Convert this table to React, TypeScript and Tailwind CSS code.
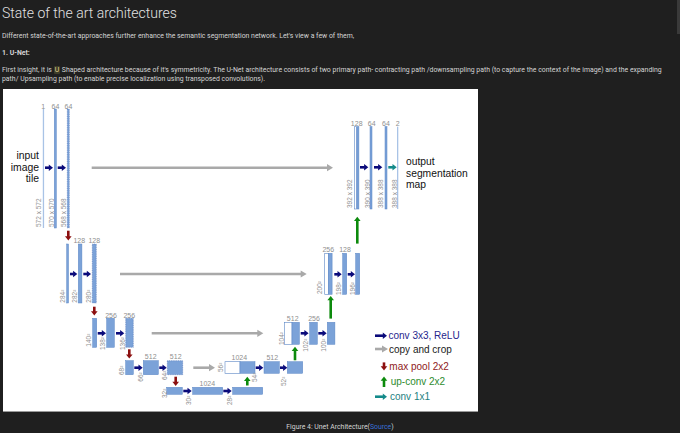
const BAR = "#7ba2d8";
const EDGE = "#5b86c5";
const NAVY = "#0a0a7a";
const GRAY = "#a9a9a9";
const RED = "#8c0f0f";
const GREEN = "#0c8a0c";
const TEAL = "#138a8a";
const LABEL = "#8f8f8f";

type BarProps = { x: number; y: number; w: number; h: number; kind?: "blue" | "dash" | "white" | "light" };

function Bar({ x, y, w, h, kind = "blue" }: BarProps) {
  if (kind === "white")
    return <rect x={x} y={y} width={w} height={h} fill="#ffffff" stroke={EDGE} strokeWidth={0.6} />;
  if (kind === "light") return <rect x={x} y={y} width={w} height={h} fill="#a9c3e6" />;
  if (kind === "dash")
    return (
      <rect x={x} y={y} width={w} height={h} fill={BAR} stroke="#3f62ad" strokeWidth={0.5} strokeDasharray="0.9 0.9" />
    );
  return <rect x={x} y={y} width={w} height={h} fill={BAR} stroke={EDGE} strokeWidth={0.5} />;
}

function Right({ x1, x2, y, color = NAVY }: { x1: number; x2: number; y: number; color?: string }) {
  return (
    <g>
      <line x1={x1} y1={y} x2={x2 - 3.5} y2={y} stroke={color} strokeWidth={2.6} />
      <polygon points={`${x2 - 4.2},${y - 3.3} ${x2},${y} ${x2 - 4.2},${y + 3.3}`} fill={color} />
    </g>
  );
}

function Copy({ x1, x2, y }: { x1: number; x2: number; y: number }) {
  return (
    <g>
      <line x1={x1} y1={y} x2={x2 - 5} y2={y} stroke={GRAY} strokeWidth={2.6} />
      <polygon points={`${x2 - 6},${y - 3.6} ${x2},${y} ${x2 - 6},${y + 3.6}`} fill={GRAY} />
    </g>
  );
}

function Down({ x, y1, y2 }: { x: number; y1: number; y2: number }) {
  return (
    <g>
      <line x1={x} y1={y1} x2={x} y2={y2 - 3.5} stroke={RED} strokeWidth={2.6} />
      <polygon points={`${x - 3.3},${y2 - 4.2} ${x + 3.3},${y2 - 4.2} ${x},${y2}`} fill={RED} />
    </g>
  );
}

function Up({ x, y1, y2 }: { x: number; y1: number; y2: number }) {
  return (
    <g>
      <line x1={x} y1={y1} x2={x} y2={y2 + 3.5} stroke={GREEN} strokeWidth={2.6} />
      <polygon points={`${x - 3.3},${y2 + 4.2} ${x + 3.3},${y2 + 4.2} ${x},${y2}`} fill={GREEN} />
    </g>
  );
}

function Num({ x, y, t }: { x: number; y: number; t: string }) {
  return (
    <text x={x} y={y + 2.5} fontSize={7} fill={LABEL} textAnchor="middle">
      {t}
    </text>
  );
}

// rotated size label, cx = visual centre, by = bottom end of the text
function Dim({ cx, by, t }: { cx: number; by: number; t: string }) {
  const bx = cx + 2.3;
  return (
    <text x={bx} y={by} fontSize={6.5} fill={LABEL} transform={`rotate(-90 ${bx} ${by})`}>
      {t}
    </text>
  );
}

function UNet() {
  return (
    <svg width="475" height="323" viewBox="3 89 475 323" fontFamily="'Liberation Sans', Arial, sans-serif">
      {/* encoder level 1 */}
      <Num x={43.3} y={106} t="1" />
      <Num x={55.5} y={106} t="64" />
      <Num x={68.5} y={106} t="64" />
      <Bar x={42.8} y={109} w={1.3} h={119} kind="light" />
      <Bar x={54.3} y={109} w={2} h={119} />
      <Bar x={67.3} y={109} w={2} h={119} kind="dash" />
      <Right x1={45} x2={53} y={167.7} />
      <Right x1={57.7} x2={66} y={167.7} />
      <Dim cx={39} by={227} t="572 x 572" />
      <Dim cx={51.7} by={227} t="570 x 570" />
      <Dim cx={64} by={227} t="568 x 568" />
      <text fontSize={10.4} fill="#111" textAnchor="end">
        <tspan x={39} y={158.8}>input</tspan>
        <tspan x={39} y={170.5}>image</tspan>
        <tspan x={39} y={182}>tile</tspan>
      </text>
      <Copy x1={91.7} x2={333} y={167.7} />
      <Down x={68.3} y1={230.7} y2={240.5} />

      {/* encoder level 2 */}
      <Num x={79.3} y={240.3} t="128" />
      <Num x={94.3} y={240.3} t="128" />
      <Bar x={66.7} y={244} w={1.8} h={59} />
      <Bar x={78.3} y={244} w={3.6} h={59} />
      <Bar x={92.3} y={244} w={4} h={59} kind="dash" />
      <Right x1={70} x2={77.3} y={274} />
      <Right x1={83.3} x2={91} y={274} />
      <Dim cx={62.3} by={302.7} t="284²" />
      <Dim cx={75} by={302.7} t="282²" />
      <Dim cx={88.3} by={302.7} t="280²" />
      <Copy x1={120} x2={306.7} y={274} />
      <Down x={94.3} y1={306.7} y2={315.5} />

      {/* encoder level 3 */}
      <Num x={111} y={315.3} t="256" />
      <Num x={129.3} y={315.3} t="256" />
      <Bar x={92.7} y={318.3} w={4} h={29} />
      <Bar x={106.7} y={318.3} w={7.6} h={29} />
      <Bar x={125.7} y={318.3} w={7.6} h={29} kind="dash" />
      <Right x1={97.7} x2={106} y={333.3} />
      <Right x1={116} x2={124.3} y={333.3} />
      <Dim cx={89} by={346.7} t="140²" />
      <Dim cx={102.7} by={350} t="138²" />
      <Dim cx={122.7} by={350} t="136²" />
      <Copy x1={151.7} x2={263.3} y={333.3} />
      <Down x={129.3} y1={349.3} y2={358.6} />

      {/* encoder level 4 */}
      <Num x={150.7} y={356} t="512" />
      <Num x={175.7} y={356} t="512" />
      <Bar x={125.7} y={360.7} w={7.6} h={14} />
      <Bar x={143.3} y={360.7} w={15} h={14} />
      <Bar x={167.3} y={360.7} w={15.4} h={14} kind="dash" />
      <Right x1={134.3} x2={142.7} y={367.7} />
      <Right x1={159.3} x2={166.7} y={367.7} />
      <Dim cx={121.7} by={375} t="68²" />
      <Dim cx={141} by={381.7} t="66²" />
      <Dim cx={165} by={380} t="64²" />
      <Copy x1={193.3} x2={215} y={367.7} />
      <Down x={175.7} y1={376.7} y2={386} />

      {/* bottom level */}
      <Num x={207.3} y={383.3} t="1024" />
      <Bar x={166.7} y={387.3} w={15.6} h={7} />
      <Bar x={192.7} y={387.3} w={30} h={7} />
      <Bar x={232.7} y={387.3} w={30} h={7} />
      <Right x1={183.3} x2={191.7} y={391} />
      <Right x1={223.3} x2={231.7} y={391} />
      <Dim cx={164.3} by={398} t="32²" />
      <Dim cx={189} by={405} t="30²" />
      <Dim cx={229.3} by={405} t="28²" />
      <Up x={247.3} y1={385.5} y2={376.7} />

      {/* decoder level 4 */}
      <Num x={239.3} y={357.3} t="1024" />
      <Num x={272.3} y={357.3} t="512" />
      <Bar x={225} y={361.7} w={15} h={11.6} kind="white" />
      <Bar x={240} y={361.7} w={15} h={11.6} />
      <Bar x={264} y={361.7} w={15.3} h={11.6} />
      <Bar x={287.3} y={361.7} w={15.4} h={11.6} />
      <Right x1={255.7} x2={263.3} y={367.7} />
      <Right x1={280} x2={287.3} y={367.7} />
      <Dim cx={221} by={372} t="56²" />
      <Dim cx={255} by={382} t="54²" />
      <Dim cx={284} by={386} t="52²" />
      <Up x={295} y1={360.3} y2={346.7} />

      {/* decoder level 3 */}
      <Num x={292.7} y={318.3} t="512" />
      <Num x={314} y={318.3} t="256" />
      <Bar x={284.3} y={322.3} w={7.7} h={22} kind="white" />
      <Bar x={292} y={322.3} w={7.4} h={22} />
      <Bar x={309.7} y={322.3} w={7.6} h={22} />
      <Bar x={327.3} y={322.3} w={7.6} h={22} />
      <Right x1={300.7} x2={308.6} y={333.3} />
      <Right x1={318.3} x2={326.7} y={333.3} />
      <Dim cx={281.7} by={345} t="104²" />
      <Dim cx={305.7} by={351.7} t="102²" />
      <Dim cx={323.3} by={351.7} t="100²" />
      <Up x={330.7} y1={318.6} y2={296} />

      {/* decoder level 2 */}
      <Num x={328.3} y={249.3} t="256" />
      <Num x={345} y={249.3} t="128" />
      <Bar x={324.7} y={253.3} w={3.6} h={41} kind="white" />
      <Bar x={328.3} y={253.3} w={3.8} h={41} />
      <Bar x={342.7} y={253.3} w={4} h={41} />
      <Bar x={355.7} y={253.3} w={4} h={41} />
      <Right x1={334.3} x2={341.7} y={274.3} />
      <Right x1={347.7} x2={355} y={274.3} />
      <Dim cx={320} by={294} t="200²" />
      <Dim cx={339} by={295} t="198²" />
      <Dim cx={352.7} by={295} t="196²" />
      <Up x={357.3} y1={243.6} y2={216.7} />

      {/* decoder level 1 */}
      <Num x={356.7} y={123.3} t="128" />
      <Num x={371.7} y={123.3} t="64" />
      <Num x={386} y={123.3} t="64" />
      <Num x={397.7} y={123.3} t="2" />
      <Bar x={354.3} y={126.7} w={2.4} h={82.3} kind="white" />
      <Bar x={356.9} y={126.7} w={2} h={82.3} />
      <Bar x={370} y={126.7} w={2} h={82.3} />
      <Bar x={385} y={126.7} w={2} h={82.3} />
      <Bar x={397} y={126.7} w={1.3} h={82.3} kind="light" />
      <Right x1={360} x2={368.3} y={167.3} />
      <Right x1={374} x2={382.3} y={167.3} />
      <Right x1={388.3} x2={396.7} y={167.3} color={TEAL} />
      <Dim cx={350} by={208} t="392 x 392" />
      <Dim cx={367.3} by={208} t="390 x 390" />
      <Dim cx={381} by={208} t="388 x 388" />
      <Dim cx={394.3} by={208} t="388 x 388" />
      <text fontSize={10.3} fill="#111">
        <tspan x={406} y={165.3}>output</tspan>
        <tspan x={406} y={176.8}>segmentation</tspan>
        <tspan x={406} y={188}>map</tspan>
      </text>

      {/* legend */}
      <Right x1={375} x2={387} y={335.7} />
      <text x={388.5} y={339.3} fontSize={10} fill="#26268c">conv 3x3, ReLU</text>
      <Copy x1={375} x2={388} y={349} />
      <text x={389} y={352.6} fontSize={10} fill="#1a1a1a">copy and crop</text>
      <Down x={384} y1={362.4} y2={370.5} />
      <text x={389.3} y={369.6} fontSize={10} fill="#8f1a1a">max pool 2x2</text>
      <Up x={384} y1={387} y2={376.5} />
      <text x={390.7} y={385.3} fontSize={10} fill="#2e8b2e">up-conv 2x2</text>
      <Right x1={375} x2={387} y={396.7} color={TEAL} />
      <text x={390} y={400.3} fontSize={10} fill="#1d7f7f">conv 1x1</text>
    </svg>
  );
}

export default function App() {
  return (
    <div className="relative h-[433px] w-[680px] overflow-hidden bg-[#1f1f1f] font-['Roboto',sans-serif] text-[#d4d4d4]">
      {/* scrollbar thumb */}
      <div className="absolute right-0 top-0 h-[34px] w-[3px] bg-[#3a3a3a]" />

      <h1 className="pl-[2px] text-[14px] font-light leading-[26px] text-[#e2e2e2]">State of the art architectures</h1>

      <p className="mt-[6px] pl-[2px] text-[6.9px] leading-[9px] whitespace-nowrap">
        Different state-of-the-art approaches further enhance the semantic segmentation network. Let's view a few of
        them,
      </p>

      <p className="mt-[7.5px] pl-[2px] text-[6.9px] font-bold leading-[9px]">1. U-Net:</p>

      <p className="mt-[8px] pl-[2px] text-[6.9px] leading-[9px] whitespace-nowrap">
        First insight, it is{" "}
        <span className="rounded-[1px] bg-[#3e3d2a] px-[1px] text-[#e3d58e]">U</span> Shaped architecture because of
        it's symmetricity. The U-Net architecture consists of two primary path- contracting path /downsampling path
        (to capture the context of the image) and the expanding
        <br />
        path/ Upsampling path (to enable precise localization using transposed convolutions).
      </p>

      <div className="ml-[3px] mt-[5.5px] h-[323px] w-[475px] border-b border-[#9a9a9a] bg-white">
        <UNet />
      </div>

      <p className="mt-[10.5px] text-center text-[6.9px] leading-[9px]">
        Figure 4: Unet Architecture(<span className="text-[#3a6fd8]">Source</span>)
      </p>
    </div>
  );
}
